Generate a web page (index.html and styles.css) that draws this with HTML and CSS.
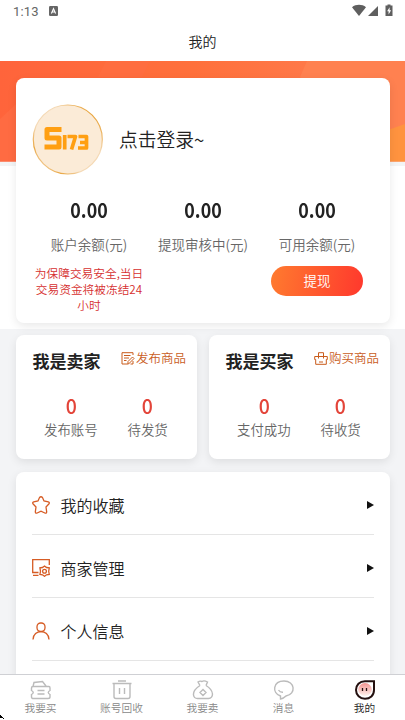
FILE: index.html
```html
<!DOCTYPE html>
<html lang="zh-CN">
<head>
<meta charset="utf-8">
<meta name="viewport" content="width=device-width, initial-scale=1">
<title>我的</title>
<link rel="stylesheet" href="styles.css">
</head>
<body>
<div class="app">
  <header class="status">
    <span class="clock">1:13</span>
    <svg class="badge" width="9" height="10" viewBox="0 0 9 10"><rect width="9" height="10" rx="1.2" fill="#666"/><path d="M2.4 7.5 4.5 2.7 6.6 7.5M3.2 6h2.6" stroke="#fff" stroke-width="1.1" fill="none"/></svg>
    <svg class="signals" width="41" height="14" viewBox="0 0 41 14" fill="#5f5f5f"><path d="M0 3.2C4 0 10 0 14 3.2L7 12Z"/><path d="M26 2v10H16Z"/><path d="M35.500 1.500V.500h3v1H40.500V12h-7V1.500Z"/><path d="M37.600 3.200 35.100 7.200h1.500v3.200L39.100 6.300h-1.500Z" fill="#fff"/></svg>
  </header>
  <h1 class="title">我的</h1>
  <main class="content">
    <section class="hero">
      <svg class="banner" width="405" height="105" viewBox="0 0 405 105">
        <defs><linearGradient id="bg"><stop stop-color="#ff643b"/><stop offset=".48" stop-color="#ff703b"/><stop offset=".75" stop-color="#ff7848"/></linearGradient></defs>
        <rect width="405" height="105" fill="#f3f4f5"/><rect width="405" height="100.500" fill="url(#bg)"/>
        <path d="M106 0 98 16H142L150 0Z" fill="#ff6d3f"/><path d="M307 0 300 16 385 100H405V0Z" fill="#ff8150"/><path d="M385 70 405 63V100.500H385Z" fill="#ff933f"/>
        <path d="M0 58 16 43V100.500H0Z" fill="#ff6b42"/>
      </svg>
      <div class="card profile">
        <div class="user">
          <svg width="72" height="72" viewBox="0 0 72 72">
            <defs><linearGradient id="ring" x1="0" y1="1" x2="1" y2="0"><stop offset=".1" stop-color="#f4d9b5"/><stop offset=".2" stop-color="#e9a743"/><stop offset=".36" stop-color="#f4d9b5"/><stop offset=".65" stop-color="#f4d9b5"/><stop offset=".85" stop-color="#e9a743"/></linearGradient><filter id="soft"><feGaussianBlur stdDeviation="1.500"/></filter></defs>
            <circle cx="35.800" cy="35.500" r="34.500" fill="#fbebd7" stroke="url(#ring)" stroke-width="1.200"/>
            <path d="M16 46.500H57" stroke="#ffc266" stroke-width="3" filter="url(#soft)"/>
            <g fill="none" stroke="#ff9f12"><path d="M29.500 25.500H15V34H27V43H12.500" stroke-width="5" stroke-linejoin="round"/><path d="M32.700 31V45.500M35.500 32.500H43.500L39.500 45.500M46.500 32.500H54.500V44H46M48 38.500H54.500" stroke-width="3.700" stroke-linejoin="round"/></g>
          </svg>
          <span class="login">点击登录~</span>
        </div>
        <div class="balances">
          <div><b>0.00</b><span>账户余额(元)</span></div>
          <div><b>0.00</b><span>提现审核中(元)</span></div>
          <div><b>0.00</b><span>可用余额(元)</span></div>
        </div>
        <div class="cash">
          <p class="notice">为保障交易安全,当日<br>交易资金将被冻结24<br>小时</p>
          <button class="withdraw">提现</button>
        </div>
      </div>
    </section>
    <section class="roles">
      <div class="card role">
        <div class="rolehead"><h2>我是卖家</h2><a><svg width="14" height="13" viewBox="0 0 14 13"><path d="M12 3V.700H1V12H7.500L13 6.500 11.500 5 7 9.500V12M3 3.500H9.500M3 6H8M3 8.500H5.500M9.500 12H12V9"/></svg>发布商品</a></div>
        <div class="counts"><div><b>0</b><span>发布账号</span></div><div><b>0</b><span>待发货</span></div></div>
      </div>
      <div class="card role">
        <div class="rolehead"><h2>我是买家</h2><a><svg width="14" height="13" viewBox="0 0 14 13"><path d="M.700 4.500H13.300V7.500H12.300V12.300H1.700V7.500H.700ZM4.500 6.500V.700H9.500V6.500M5 10H9"/></svg>购买商品</a></div>
        <div class="counts"><div><b>0</b><span>支付成功</span></div><div><b>0</b><span>待收货</span></div></div>
      </div>
    </section>
    <section class="card menu">
      <a class="item"><svg class="icon" width="18" height="18" viewBox="0 0 18 18"><path d="M7.500 1.500Q9 0 10.500 1.500L12 5 16.300 5.800Q18 6.500 16.800 8L14 11 14.700 16Q14.500 17.700 12.800 17L9 15.200 5.200 17Q3.500 17.700 3.300 16L4 11 1.200 8Q0 6.500 1.700 5.800L6 5Z"/></svg><span>我的收藏</span><i></i></a>
      <a class="item"><svg class="icon" width="18" height="18" viewBox="0 0 18 18"><path d="M6.500 13.500H.700V.700H17.300V6M1 16.300H6.500M12.500 7 14.500 8.500 17.300 8.800 16.700 12.300 17.300 15.500 14.500 15.800 12.500 17.300 10.500 15.800 7.900 15.500 8.500 12.300 7.900 8.800 10.500 8.500Z"/><circle cx="12.500" cy="12.200" r="1.900"/></svg><span>商家管理</span><i></i></a>
      <a class="item"><svg class="icon" width="18" height="18" viewBox="0 0 18 18"><rect x="5" y="1" width="8" height="8.500" rx="3.700"/><path d="M1 17.500C1.300 7 16.700 7 17 17.500"/></svg><span>个人信息</span><i></i></a>
    </section>
  </main>
  <nav class="tabs">
    <a><svg width="22" height="20" viewBox="0 0 22 20"><path d="M3 6.500H19Q20 6.500 20 8V10.500Q16.500 12.500 20 14.500V17Q20 18.500 18 18.500H3.500Q1.500 18.500 1.500 17V14.500Q5 12.500 1.500 10.500V8Q1.500 6.500 3 6.500L4 2.500 12.500 1.500 16 6M7.500 10.500H14.500M7.500 14H14.500"/></svg><span>我要买</span></a>
    <a><svg width="22" height="20" viewBox="0 0 22 20"><path d="M1.500 3.500H20.500M7 1H15M3 4V16.500Q3 18.500 5 18.500H17Q19 18.500 19 16.500V4M8.500 8V14M13.500 8V14"/></svg><span>账号回收</span></a>
    <a><svg width="22" height="20" viewBox="0 0 22 20"><path d="M8 5.500 6 2Q8 .500 10 1.500 12 0 15.500 2L14 5.500M8 5.500Q1 10 1.500 15 2 18.500 5.500 18.500H16.500Q20.500 18 20.500 14 20 9 14 5.500M11 9.500 14 12.500 11 15.500 8 12.500Z"/></svg><span>我要卖</span></a>
    <a><svg width="22" height="20" viewBox="0 0 22 20"><path d="M7.500 16C-1.500 13 0 1 11 1S23.500 14 13 16Q10.500 18.500 7.500 19ZM5.500 10Q7 12.500 10 12.300"/></svg><span>消息</span></a>
    <a class="active"><svg width="22" height="20" viewBox="0 0 22 20"><defs><linearGradient id="face" x2="0" y2="1"><stop stop-color="#f49490"/><stop offset="1" stop-color="#fff2ed"/></linearGradient></defs><path d="M11 1.200H20V10C20 15.500 16 18.800 11 18.800S2 15 2 10 5.500 1.200 11 1.200Z" fill="#fff"/><ellipse cx="11" cy="9.500" rx="6.800" ry="6.500" style="stroke:none" fill="url(#face)"/><path d="M8.500 8V11M12.500 8V11" style="stroke-width:1.300"/></svg><span>我的</span></a>
    <svg class="pointer" width="5" height="5" viewBox="0 0 5 5"><path d="M0 0H1V1H2V2H3V3H4V4H3V3H2V3H0Z"/></svg>
  </nav>
</div>
</body>
</html>
```
FILE: styles.css
```css
* { box-sizing: border-box; }
body { margin: 0; background: #fff; color: #222; font-family: "Noto Sans CJK SC", sans-serif; font-weight: 350; overflow: hidden; }
h1, h2, p { margin: 0; }
.app { height: 720px; display: flex; flex-direction: column; overflow: hidden; }
.status { height: 24px; flex: none; display: flex; align-items: center; padding: 0 13px; color: #666; }
.clock { width: 36px; font: 13px/22px Roboto, sans-serif; letter-spacing: .2px; }
.badge { margin-top: -2px; }
.signals { margin: -3px -1px 0 auto; }
.title { height: 37px; flex: none; font-size: 14px; font-weight: 350; line-height: 35px; text-align: center; }
.content { flex: 1; min-height: 0; overflow: hidden; background: #f3f4f6; }
.hero { position: relative; height: 268px; padding: 16.5px 15px 0 16px; background: #fff; }
.banner { position: absolute; left: 0; top: 0; }
.card { background: #fff; border-radius: 8px; box-shadow: 0 3px 10px rgba(0, 0, 0, .09); }
.profile { position: relative; height: 245px; padding: 26px 16px 0; }
.user { display: flex; align-items: center; }
.login { margin: -2px 0 0 15px; font-size: 18.8px; line-height: 30px; }
.balances { display: grid; grid-template-columns: repeat(3, 1fr); margin-top: 20px; text-align: center; }
.balances b, .counts b { display: block; font-size: 20.5px; font-weight: 700; line-height: 26px; transform: scaleX(.87); }
.balances span { display: block; margin-top: 11px; color: #666; font-size: 13.5px; line-height: 22px; white-space: nowrap; }
.cash { display: flex; justify-content: space-between; margin-top: 11px; }
.notice { width: 114px; margin-top: -1px; color: #d62f2f; font-size: 11.7px; line-height: 16.4px; text-align: center; white-space: nowrap; }
.withdraw { width: 92px; height: 30px; margin-right: 11px; padding: 0 0 1px; border: 0; border-radius: 15px; background: linear-gradient(100deg, #ff7b2f, #ff382d); color: #fff; font: 350 13.5px/29px "Noto Sans CJK SC", sans-serif; }
.roles { display: grid; grid-template-columns: 1fr 1fr; gap: 12px; padding: 6px 15px 12.5px 16px; }
.role { height: 124px; padding: 13px 11px 0 16.5px; }
.rolehead { display: flex; align-items: center; justify-content: space-between; height: 26px; }
.rolehead h2 { font-size: 17px; font-weight: 700; line-height: 26px; }
.rolehead a { display: flex; align-items: center; gap: 1px; margin-top: -6px; color: #c95c1c; font-size: 12.5px; line-height: 20px; }
.rolehead svg { fill: none; stroke: currentColor; stroke-width: 1; }
.counts { display: grid; grid-template-columns: 1fr 1fr; margin-top: 18px; text-align: center; }
.counts b { color: #e34439; font-weight: 500; transform: scaleX(.95); }
.counts span { display: block; color: #666; font-size: 13.4px; line-height: 22px; }
.menu { height: 260px; margin: 0 15px 0 16px; padding: 0 16px; }
.item { display: flex; align-items: center; height: 63px; padding-top: 5px; border-bottom: 1px solid #e5e5e5; font-size: 16px; }
.icon { margin-right: 10.5px; fill: none; stroke: #d65c25; stroke-width: 1.3; }
.item i { margin-left: auto; border-left: 7px solid #111; border-top: 4.5px solid transparent; border-bottom: 4.5px solid transparent; }
.tabs { position: relative; height: 46px; flex: none; display: grid; grid-template-columns: repeat(5, 1fr); border-top: 1px solid #cfd0d4; background: #fff; }
.tabs a { display: flex; flex-direction: column; align-items: center; padding-top: 5px; color: #888; font-size: 10.7px; line-height: 16px; }
.tabs a svg { flex: none; fill: none; stroke: #bbb; stroke-width: 1.4; }
.tabs .active { color: #222; }
.tabs .active svg { stroke: #24100f; stroke-width: 2; }
.pointer { position: absolute; left: 0; bottom: 0; }
```
